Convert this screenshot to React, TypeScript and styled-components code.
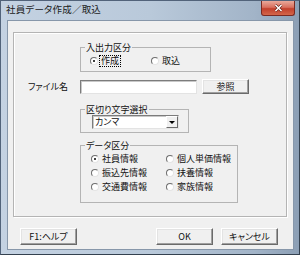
import React from "react";
import styled, { createGlobalStyle } from "styled-components";

const GlobalStyle = createGlobalStyle`
  html, body {
    margin: 0;
    padding: 0;
  }
  body {
    width: 300px;
    height: 255px;
    overflow: hidden;
    font-family: "Noto Sans CJK JP", "Liberation Sans", sans-serif;
    font-size: 9px;
    font-feature-settings: "palt";
    color: #111;
  }
`;

const Window = styled.div`
  width: 300px;
  height: 255px;
  box-sizing: border-box;
  display: flex;
  flex-direction: column;
  border: 1px solid #52637a;
  border-right-color: #34414f;
  border-bottom-color: #34414f;
  background: linear-gradient(to right, #c4d2e2 0%, #b9c9da 50%, #a2b4c8 85%, #8c9fb5 100%);
`;

const TitleBar = styled.div`
  height: 19px;
  display: flex;
  align-items: flex-start;
  justify-content: space-between;
  padding-left: 5px;
`;

const TitleText = styled.span`
  font-size: 9.5px;
  line-height: 11px;
  margin-top: 3px;
  color: #1a1a1a;
  letter-spacing: 0.2px;
`;

const CloseButton = styled.div`
  width: 34px;
  height: 15px;
  margin-right: 4px;
  display: flex;
  align-items: center;
  justify-content: center;
  box-sizing: border-box;
  border: 1px solid #7a2a22;
  border-top: none;
  border-radius: 0 0 3px 3px;
  background: linear-gradient(to bottom, #e9a99b 0%, #d8705f 45%, #c2402c 55%, #d3664a 100%);
`;

const Frame = styled.div`
  flex: 1;
  display: flex;
  padding: 0 5px 4px 6px;
`;

const Client = styled.div`
  flex: 1;
  display: flex;
  flex-direction: column;
  background: #f0f0f0;
  border: 1px solid #8797aa;
  padding: 11px 6px 4px 5px;
`;

const Panel = styled.div`
  border: 1px solid #b4b4b4;
  box-shadow: inset 1px 1px 0 #fff, 1px 1px 0 #fff;
  padding: 9px 0 13px;
  display: grid;
  grid-template-columns: 66px auto;
  align-items: center;
  justify-items: start;
`;

const RowLabel = styled.span<{ $gap?: number }>`
  justify-self: end;
  padding-right: 12px;
  line-height: 11px;
  margin-top: ${({ $gap }) => $gap ?? 0}px;
`;

const Cell = styled.div<{ $gap?: number }>`
  grid-column: 2;
  margin-top: ${({ $gap }) => $gap ?? 0}px;
  display: flex;
  align-items: center;
  gap: 5px;
`;

const Group = styled.fieldset<{ $width: number; $pt?: number; $pb: number }>`
  margin: 0;
  min-width: 0;
  width: ${({ $width }) => $width}px;
  box-sizing: border-box;
  border: 1px solid #b4b4b4;
  padding: ${({ $pt }) => $pt ?? 0}px 0 ${({ $pb }) => $pb}px;
`;

const Legend = styled.legend`
  margin-left: 4px;
  padding: 0 1px;
  line-height: 11px;
  font-size: 9px;
`;

const RadioGrid = styled.div<{ $col: number; $row: number; $indent: number }>`
  display: grid;
  grid-template-columns: ${({ $col }) => $col}px auto;
  grid-auto-rows: ${({ $row }) => $row}px;
  align-items: center;
  padding-left: ${({ $indent }) => $indent}px;
`;

const RadioItem = styled.label`
  display: flex;
  align-items: center;
  line-height: 10px;
  white-space: nowrap;
`;

const RadioDot = styled.span<{ $checked?: boolean }>`
  width: 8px;
  height: 8px;
  box-sizing: border-box;
  border-radius: 50%;
  border: 1px solid;
  border-color: #6e6e6e #e4e4e4 #e4e4e4 #6e6e6e;
  background: #fff;
  margin-right: 2px;
  display: flex;
  align-items: center;
  justify-content: center;
  &::after {
    content: "";
    width: 2px;
    height: 2px;
    border-radius: 50%;
    background: #000;
    display: ${({ $checked }) => ($checked ? "block" : "none")};
  }
`;

const RadioText = styled.span<{ $focused?: boolean }>`
  padding: 0 1px;
  outline: ${({ $focused }) => ($focused ? "1px dotted #000" : "none")};
`;

const TextBox = styled.div`
  width: 117px;
  height: 14px;
  box-sizing: border-box;
  background: #fff;
  border: 1px solid;
  border-color: #7c7c7c #e3e3e3 #e3e3e3 #7c7c7c;
  box-shadow: inset 1px 1px 0 #c8c8c8;
`;

const Button = styled.div<{ $width: number; $height: number }>`
  width: ${({ $width }) => $width}px;
  height: ${({ $height }) => $height}px;
  box-sizing: border-box;
  display: flex;
  align-items: center;
  justify-content: center;
  background: #f0f0f0;
  border: 1px solid;
  border-color: #fff #6a6a6a #6a6a6a #fff;
  box-shadow: inset -1px -1px 0 #a0a0a0, inset 1px 1px 0 #e3e3e3;
  line-height: 11px;
`;

const Combo = styled.div`
  width: 87px;
  height: 14px;
  margin-left: 11px;
  box-sizing: border-box;
  display: flex;
  background: #fff;
  border: 1px solid;
  border-color: #7c7c7c #e3e3e3 #e3e3e3 #7c7c7c;
  box-shadow: inset 1px 1px 0 #c8c8c8;
`;

const ComboText = styled.span`
  flex: 1;
  padding-left: 2px;
  line-height: 12px;
`;

const ComboArrow = styled.span`
  width: 12px;
  box-sizing: border-box;
  display: flex;
  align-items: center;
  justify-content: center;
  background: #f0f0f0;
  border: 1px solid;
  border-color: #fff #6a6a6a #6a6a6a #fff;
  &::after {
    content: "";
    border-left: 3px solid transparent;
    border-right: 3px solid transparent;
    border-top: 3px solid #000;
  }
`;

const ButtonRow = styled.div`
  margin-top: 11px;
  padding: 0 9px 0 7px;
  display: flex;
  justify-content: space-between;
`;

const ButtonGroup = styled.div`
  display: flex;
  gap: 8px;
`;

type RadioProps = { label: string; checked?: boolean; focused?: boolean };

const Radio = ({ label, checked, focused }: RadioProps) => (
  <RadioItem>
    <RadioDot $checked={checked} />
    <RadioText $focused={focused}>{label}</RadioText>
  </RadioItem>
);

export default function App() {
  return (
    <>
      <GlobalStyle />
      <Window>
        <TitleBar>
          <TitleText>社員データ作成／取込</TitleText>
          <CloseButton>
            <svg width="9" height="8" viewBox="0 0 9 8">
              <path d="M1.5 1 L7.5 7 M7.5 1 L1.5 7" stroke="#5a1a12" strokeWidth="2.6" />
              <path d="M1.5 1 L7.5 7 M7.5 1 L1.5 7" stroke="#fff" strokeWidth="1.6" />
            </svg>
          </CloseButton>
        </TitleBar>
        <Frame>
          <Client>
            <Panel>
              <Cell>
                <Group $width={131} $pt={2} $pb={5}>
                  <Legend>入出力区分</Legend>
                  <RadioGrid $col={61} $row={11} $indent={9}>
                    <Radio label="作成" checked focused />
                    <Radio label="取込" />
                  </RadioGrid>
                </Group>
              </Cell>

              <RowLabel $gap={7}>ファイル名</RowLabel>
              <Cell $gap={7}>
                <TextBox />
                <Button $width={47} $height={15}>参照</Button>
              </Cell>

              <Cell $gap={10}>
                <Group $width={109} $pb={3}>
                  <Legend>区切り文字選択</Legend>
                  <Combo>
                    <ComboText>カンマ</ComboText>
                    <ComboArrow />
                  </Combo>
                </Group>
              </Cell>

              <Cell $gap={7}>
                <Group $width={158} $pt={1} $pb={8}>
                  <Legend>データ区分</Legend>
                  <RadioGrid $col={75} $row={14} $indent={10}>
                    <Radio label="社員情報" checked />
                    <Radio label="個人単価情報" />
                    <Radio label="振込先情報" />
                    <Radio label="扶養情報" />
                    <Radio label="交通費情報" />
                    <Radio label="家族情報" />
                  </RadioGrid>
                </Group>
              </Cell>
            </Panel>

            <ButtonRow>
              <Button $width={57} $height={17}>F1:ヘルプ</Button>
              <ButtonGroup>
                <Button $width={57} $height={17}>OK</Button>
                <Button $width={57} $height={17}>キャンセル</Button>
              </ButtonGroup>
            </ButtonRow>
          </Client>
        </Frame>
      </Window>
    </>
  );
}
